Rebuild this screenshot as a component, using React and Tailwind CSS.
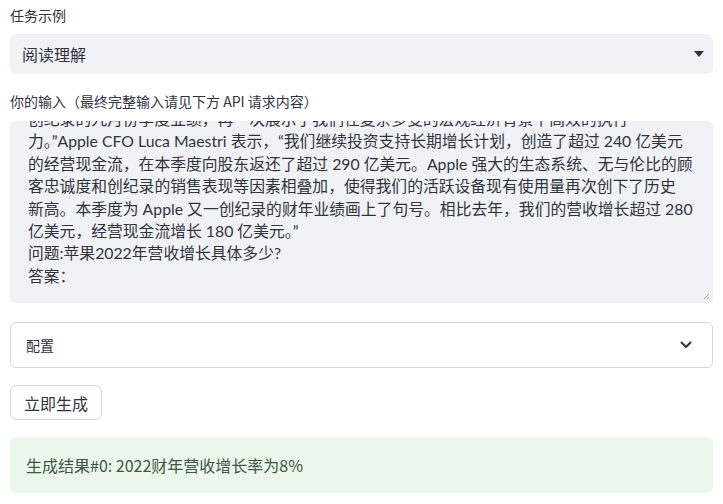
const lines = [
  "创纪录的九月份季度业绩，再一次展示了我们在复杂多变的宏观经济背景下高效的执行",
  "力。”Apple CFO Luca Maestri 表示，“我们继续投资支持长期增长计划，创造了超过 240 亿美元",
  "的经营现金流，在本季度向股东返还了超过 290 亿美元。Apple 强大的生态系统、无与伦比的顾",
  "客忠诚度和创纪录的销售表现等因素相叠加，使得我们的活跃设备现有使用量再次创下了历史",
  "新高。本季度为 Apple 又一创纪录的财年业绩画上了句号。相比去年，我们的营收增长超过 280",
  "亿美元，经营现金流增长 180 亿美元。”",
  "问题:苹果2022年营收增长具体多少?",
  "答案：",
]

function Caret() {
  return <svg width="10" height="6" viewBox="0 0 10 6">
    <path d="M0 0 L10 0 L5 6 Z" fill="#31333f" />
  </svg>
}

function Chevron() {
  return <svg width="12" height="8" viewBox="0 0 12 8" fill="none">
    <path d="M1.5 1.5 L6 6 L10.5 1.5" stroke="#31333f" strokeWidth="2" strokeLinecap="round" strokeLinejoin="round" />
  </svg>
}

export default function App() {
  return <div className="w-[723px] h-[504px] bg-white px-[10px] pt-[5px] font-['Noto_Sans_CJK_SC',sans-serif] text-[#31333f] overflow-hidden">
    <div className="text-[14px] leading-[20px]">任务示例</div>
    <div className="mt-[9px] h-[40px] rounded-[6px] bg-[#f0f2f6] flex items-center justify-between pl-[12px] pr-[9px]">
      <span className="text-[16px]">阅读理解</span>
      <Caret />
    </div>

    <div className="mt-[17px] text-[14px] leading-[20px]">你的输入（最终完整输入请见下方 API 请求内容）</div>
    <div className="relative mt-[10px] h-[182px] rounded-[6px] bg-[#f0f2f6] overflow-hidden">
      <div className="mt-[-13px] pl-[18px] text-[15.8px] leading-[22.4px] font-['Lato','Noto_Sans_CJK_SC',sans-serif]">
        {lines.map((l, i) => <div key={i} className="whitespace-nowrap">{l}</div>)}
      </div>
      <svg className="absolute right-[3px] bottom-[3px]" width="7" height="7" viewBox="0 0 7 7">
        <path d="M6 1 L1 6 M6 4 L4 6" stroke="#a0a0a8" strokeWidth="1" />
      </svg>
    </div>

    <div className="mt-[19px] h-[46px] rounded-[6px] border border-[#d6d6d9] flex items-center justify-between pl-[15px] pr-[20px]">
      <span className="text-[14px]">配置</span>
      <Chevron />
    </div>

    <button className="mt-[17px] h-[35px] px-[13px] rounded-[6px] border border-[#d6d6d9] bg-white text-[16px] flex items-center">立即生成</button>

    <div className="mt-[17px] h-[56px] rounded-[6px] bg-[#ebf6ec] flex items-center pl-[16px] text-[16px] text-[#3d5942]">
      生成结果#0: 2022财年营收增长率为8%
    </div>
  </div>
}
